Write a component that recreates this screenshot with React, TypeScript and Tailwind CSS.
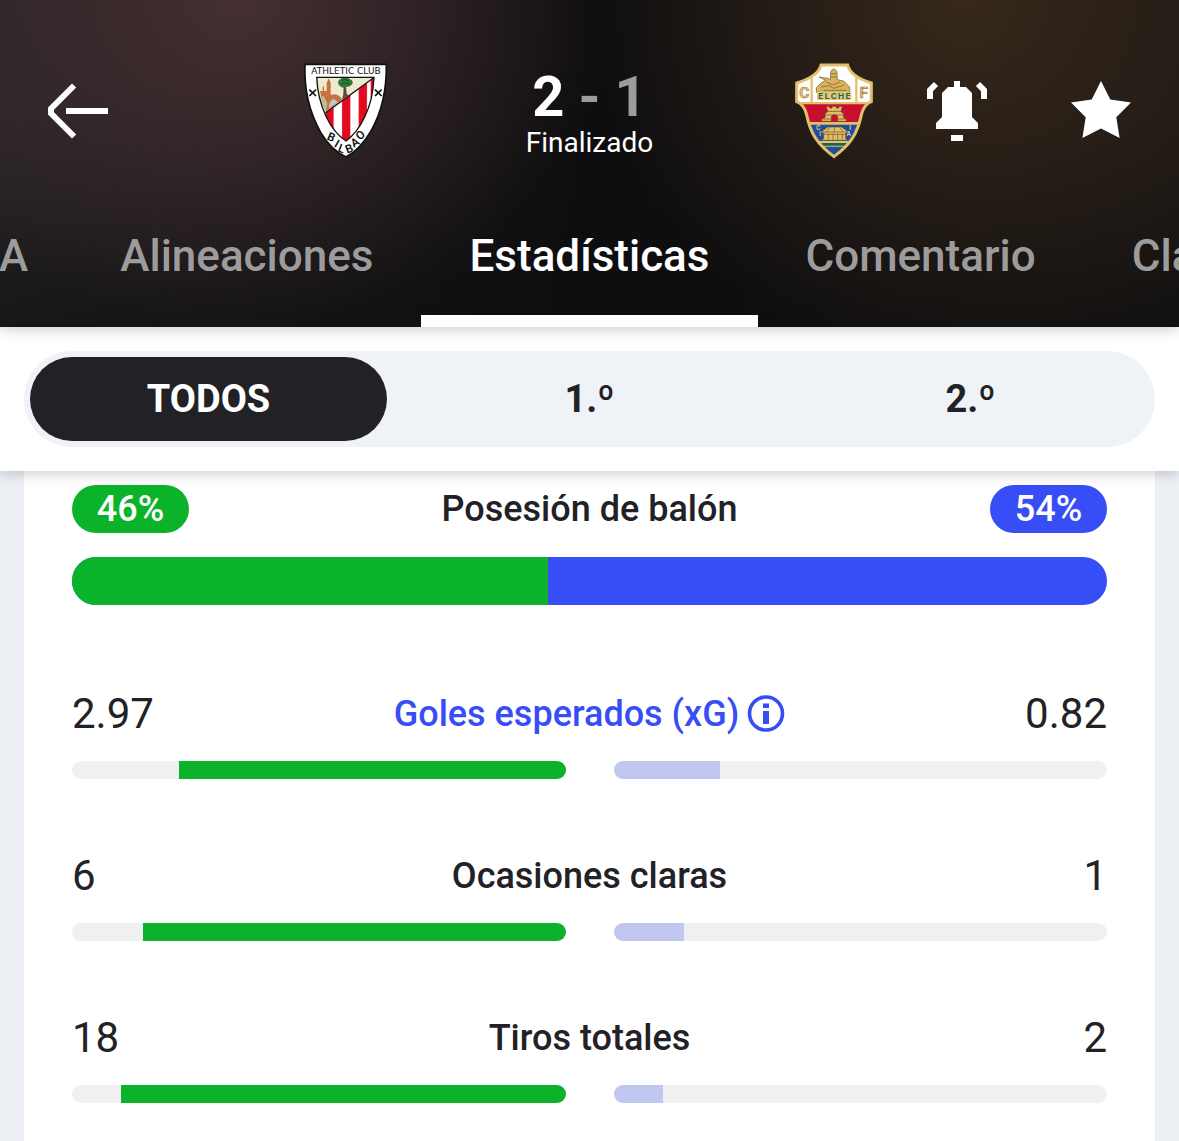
import { clsx } from "clsx";

const stats = [
  { label: "Goles esperados (xG)", home: 2.97, away: 0.82, info: true },
  { label: "Ocasiones claras", home: 6, away: 1 },
  { label: "Tiros totales", home: 18, away: 2 },
];

const periods = ["TODOS", "1.º", "2.º"];

const AthleticCrest = () => {
  return (
    <svg viewBox="36 38 264 288" className="h-24" role="img" aria-label="Athletic Club">
      <path
        d="M45 42H289C290 110 278 180 244 240C222 278 194 306 168 320C142 308 112 280 92 246C58 186 42 112 45 42Z"
        fill="#fff"
        stroke="#111"
        strokeWidth="5"
      />
      <path d="M80 81H252C250 128 242 164 224 200C208 234 190 256 168 272C146 258 124 232 108 198C90 160 82 122 80 81Z" fill="#eee8cc" />
      <path d="M90 122H98V110L102 106V122H110V98L116 84L122 98V134L134 132Q150 134 156 148L110 182L98 160Z" fill="#c9703f" />
      <path d="M116 174Q118 152 130 146Q140 148 143 156Z" fill="#b7cdc8" />
      <path d="M88 140L102 138L112 160L107 186Z" fill="#b9bf95" />
      <path d="M161 106H168L170 132L176 134L156 148L160 132Z" fill="#554c36" />
      <path d="M144 98C144 88 152 88 154 84C162 78 176 82 180 87C190 90 190 100 184 104C178 112 166 108 162 112C154 112 148 108 144 98Z" fill="#2f7a3a" />
      <path d="M156 90Q166 84 176 92M152 102Q164 94 178 102" fill="none" stroke="#174d25" strokeWidth="3" />
      <path d="M252 81C250 128 242 164 224 200C208 234 190 256 168 272C146 258 124 232 108 198L107 186Z" fill="#fff" />
      <path
        d="M107 186L131 169V238C119 222 113 209 108 198ZM156 152L181 134V262L168 272L156 262ZM206 116L231 98V184Q220 212 206 232ZM242 90L252 81Q250 118 242 148Z"
        fill="#e30a1f"
      />
      <path d="M131 168V238M156 151V262M181 133V261M206 115V232M231 97V184" stroke="#e8a5a8" strokeWidth="1" />
      <path
        d="M80 81H252C250 128 242 164 224 200C208 234 190 256 168 272C146 258 124 232 108 198C90 160 82 122 80 81ZM107 187L250 83"
        fill="none"
        stroke="#111"
        strokeWidth="4"
      />
      <path d="M58 118L78 137M78 118L58 137M255 118L275 137M275 118L255 137" stroke="#111" strokeWidth="5" />
      <g fill="#111" textAnchor="middle">
        <text x="168" y="71" fontSize="27" fontFamily="DejaVu Sans, sans-serif">ATHLETIC CLUB</text>
        <g fontSize="35" fontWeight="600" fontFamily="Roboto, sans-serif">
          <text transform="translate(119 271) rotate(24)">B</text>
          <text transform="translate(135 290) rotate(30)">I</text>
          <text transform="translate(151 306) rotate(20)">L</text>
          <text transform="translate(182 306) rotate(-22)">B</text>
          <text transform="translate(201 286) rotate(-32)">A</text>
          <text transform="translate(219 263) rotate(-42)">O</text>
        </g>
      </g>
    </svg>
  );
};

const ElcheCrest = () => {
  return (
    <svg viewBox="27 38 264 288" className="h-24" role="img" aria-label="Elche">
      <defs>
        <clipPath id="elche">
          <path d="M120 44H200Q208 78 271 98V154Q250 162 242 190Q232 238 214 264Q198 290 159 319Q120 290 104 264Q86 238 76 190Q68 162 47 154V98Q112 78 120 44Z" />
        </clipPath>
      </defs>
      <g clipPath="url(#elche)">
        <path d="M40 40H280V160H40Z" fill="#fff" />
        <path d="M60 160H260V217H60Z" fill="#c8102e" />
        <path d="M60 217H260V325H60Z" fill="#1d4f9e" />
        <path d="M60 272H260V278H60Z" fill="#ddc77b" />
        <path d="M60 278H260V286H60Z" fill="#176b3b" />
        <path d="M60 155H260V162H60ZM60 215H260V223H60ZM60 286H260V289H60Z" fill="#e3bf6c" />
        <path d="M92 70V156M226 70V156" stroke="#e3bf6c" strokeWidth="7" />
      </g>
      <path
        d="M120 44H200Q208 78 271 98V154Q250 162 242 190Q232 238 214 264Q198 290 159 319Q120 290 104 264Q86 238 76 190Q68 162 47 154V98Q112 78 120 44Z"
        fill="none"
        stroke="#e3bf6c"
        strokeWidth="9"
      />
      <path
        d="M106 126V112L120 98L134 90L114 80L140 84L148 88L149 64Q158 48 168 64L169 88L188 92L206 110V126Z"
        fill="#d8b45f"
        stroke="#75572a"
        strokeWidth="2"
      />
      <path d="M150 70H166M148 80H168M136 94L154 104L176 96M120 110L144 106L158 114L190 104M128 120H196" fill="none" stroke="#75572a" strokeWidth="2" />
      <path d="M108 124H211V149H108Z" fill="#e3c77d" />
      <path
        d="M122 213V206L132 202V190L140 184L136 168H146V173H153V168H166V173H173V168H184L180 184L188 190V202L196 206V213H170V198Q160 188 151 198V213Z"
        fill="#e3bf6c"
        stroke="#6b3b20"
        strokeWidth="2"
      />
      <path d="M140 183H180M132 194H188M126 206H150M171 206H194" stroke="#6b3b20" strokeWidth="2" />
      <path d="M119 245L132 236L140 230H182L202 245L194 249V265L200 270H120L128 265V249Z" fill="#e3bf6c" stroke="#6b5326" strokeWidth="2" />
      <path d="M122 245H200M128 252H194M142 250V268M156 250V268M170 250V268M184 250V268M146 231L136 244M160 231V244M176 231L186 244" stroke="#6b5326" strokeWidth="2" />
      <g fontFamily="Inter, sans-serif" textAnchor="middle">
        <g fontSize="46" fontWeight="700" fontFamily="Roboto, sans-serif" fill="#e3c77d" stroke="#a58040" strokeWidth="2">
          <text x="70" y="142">C</text>
          <text x="248" y="142">F</text>
        </g>
        <g fontSize="24" fontWeight="700" fill="#176b3b">
          <text x="119" y="145">E</text>
          <text x="138" y="145">L</text>
          <text x="158" y="145">C</text>
          <text x="180" y="145">H</text>
          <text x="201" y="145">E</text>
        </g>
        <g fontSize="18" fontWeight="600" fill="#e9d596">
          <text x="112" y="240">C</text>
          <text x="117" y="256">I</text>
          <text x="207" y="238">I</text>
          <text x="203" y="256">A</text>
        </g>
      </g>
    </svg>
  );
};

const Header = () => {
  return (
    <header className="relative z-10 bg-[radial-gradient(ellipse_32%_100%_at_20%_0%,#452f32,transparent),radial-gradient(ellipse_32%_110%_at_82%_0%,#36281b,transparent),linear-gradient(180deg,transparent_40%,#0d0d0e90),linear-gradient(90deg,#272425,#0e0d0f_50%,#1a1614)] pt-[63px] text-white shadow-[0_3px_12px_#00000030]">
      <div className="grid h-24 grid-cols-[1fr_auto_1fr] items-center">
        <button aria-label="Volver" className="ml-[42px] w-[72px]">
          <svg viewBox="0 0 24 24" fill="currentColor">
            <path d="M10 2.8L11.4 4.2L4 11.6V12.4L11.4 19.8L10 21.2L2 13.2V10.8ZM8 11H22V13H8Z" />
          </svg>
        </button>
        <div className="flex items-center">
          <div className="flex w-24 justify-center"><AthleticCrest /></div>
          <div className="flex w-[392px] flex-col items-center pt-1">
            <p className="flex gap-[14px] text-[56px] leading-[60px] font-bold">
              <span>2</span>
              <span className="text-[#9d9c9d]">-</span>
              <span className="text-[#9d9c9d]">1</span>
            </p>
            <p className="text-[28px] leading-8">Finalizado</p>
          </div>
          <div className="flex w-24 justify-center"><ElcheCrest /></div>
        </div>
        <div className="flex justify-end gap-[72px] pr-[42px]">
          <button aria-label="Notificaciones" className="w-[72px]">
            <svg viewBox="0 0 24 24" fill="currentColor">
              <path d="M11 2H13V4H15L17 6V14L19 16V18H5V16L7 14V6L9 4H11ZM10 20H14V22H10ZM2 8V4.7L4.3 2.3L5.7 3.7L4 5.4V8ZM22 8V4.7L19.7 2.3L18.3 3.7L20 5.4V8Z" />
            </svg>
          </button>
          <button aria-label="Favorito" className="w-[72px]">
            <svg viewBox="0 0 24 24" fill="currentColor">
              <path d="M12 2L15.1 8.2L22 9.2L17.1 14.1L18.2 21L12 17.8L5.8 21L6.9 14.1L2 9.2L8.9 8.2Z" />
            </svg>
          </button>
        </div>
      </div>
      <nav className="mt-[71px] grid grid-cols-[1fr_auto_1fr] text-[44px] leading-[52px] font-medium whitespace-nowrap">
        <div className="flex justify-end overflow-hidden text-[#9d9c9d]">
          <a href="#" className="pr-11">A</a>
          <a href="#" className="px-12">Alineaciones</a>
        </div>
        <a href="#" aria-current="page" className="border-b-12 border-white px-12 pb-[33px]">Estadísticas</a>
        <div className="flex overflow-hidden text-[#9d9c9d]">
          <a href="#" className="px-12">Comentario</a>
          <a href="#" className="px-12">Clasificación</a>
        </div>
      </nav>
    </header>
  );
};

const PeriodFilter = () => {
  return (
    <div className="relative bg-white p-6 shadow-[0_3px_12px_#00000030]">
      <div className="grid grid-cols-3 gap-6 rounded-full bg-[#eff3f7] p-[6px]">
        {periods.map((period, i) => (
          <button
            key={period}
            aria-pressed={i === 0}
            className={clsx("h-[84px] rounded-full text-[38px] font-bold", i === 0 && "bg-[#222226] text-white")}
          >
            {period}
          </button>
        ))}
      </div>
    </div>
  );
};

const Bar = ({ value, total, home }: { value: number; total: number; home?: boolean }) => {
  return (
    <div className={clsx("flex h-[18px] flex-1 overflow-hidden rounded-full bg-[#f0f0f2]", home && "justify-end")}>
      <div className={home ? "bg-[#0bb32a]" : "bg-[#c2c7f2]"} style={{ width: `${(value / total) * 100}%` }} />
    </div>
  );
};

const App = () => {
  return (
    <div className="min-h-screen overflow-hidden bg-[#ecf0f5] font-['Roboto',sans-serif] text-[#222226]">
      <Header />
      <PeriodFilter />
      <main className="mx-6 bg-white px-12 pt-[14px] pb-[38px]">
        <section>
          <div className="flex items-center justify-between text-[36px] leading-[48px] font-medium">
            <span className="w-[117px] rounded-full bg-[#0bb32a] text-center text-white">46%</span>
            <h2>Posesión de balón</h2>
            <span className="w-[117px] rounded-full bg-[#374df5] text-center text-white">54%</span>
          </div>
          <div className="mt-6 flex h-12 overflow-hidden rounded-full bg-[#374df5]">
            <div className="w-[46%] bg-[#0bb32a]" />
          </div>
        </section>
        <div className="mt-[84px] flex flex-col gap-[72px]">
          {stats.map(({ label, home, away, info }) => (
            <section key={label}>
              <div className="grid grid-cols-[1fr_auto_1fr] items-center text-[42px] leading-[50px]">
                <span>{home}</span>
                {info ? (
                  <button className="flex items-center gap-2 text-[36px] font-medium text-[#374df5]">
                    {label}
                    <svg viewBox="0 0 38 38" className="w-[38px]" fill="currentColor">
                      <circle cx="19" cy="18.5" r="16.5" fill="none" stroke="currentColor" strokeWidth="3.6" />
                      <path d="M16 8.5H22V13H16ZM16 16H22V29H16Z" />
                    </svg>
                  </button>
                ) : (
                  <h2 className="text-[36px] font-medium">{label}</h2>
                )}
                <span className="text-right">{away}</span>
              </div>
              <div className="mt-[22px] flex gap-12">
                <Bar value={home} total={home + away} home />
                <Bar value={away} total={home + away} />
              </div>
            </section>
          ))}
        </div>
      </main>
    </div>
  );
};

export default App;
